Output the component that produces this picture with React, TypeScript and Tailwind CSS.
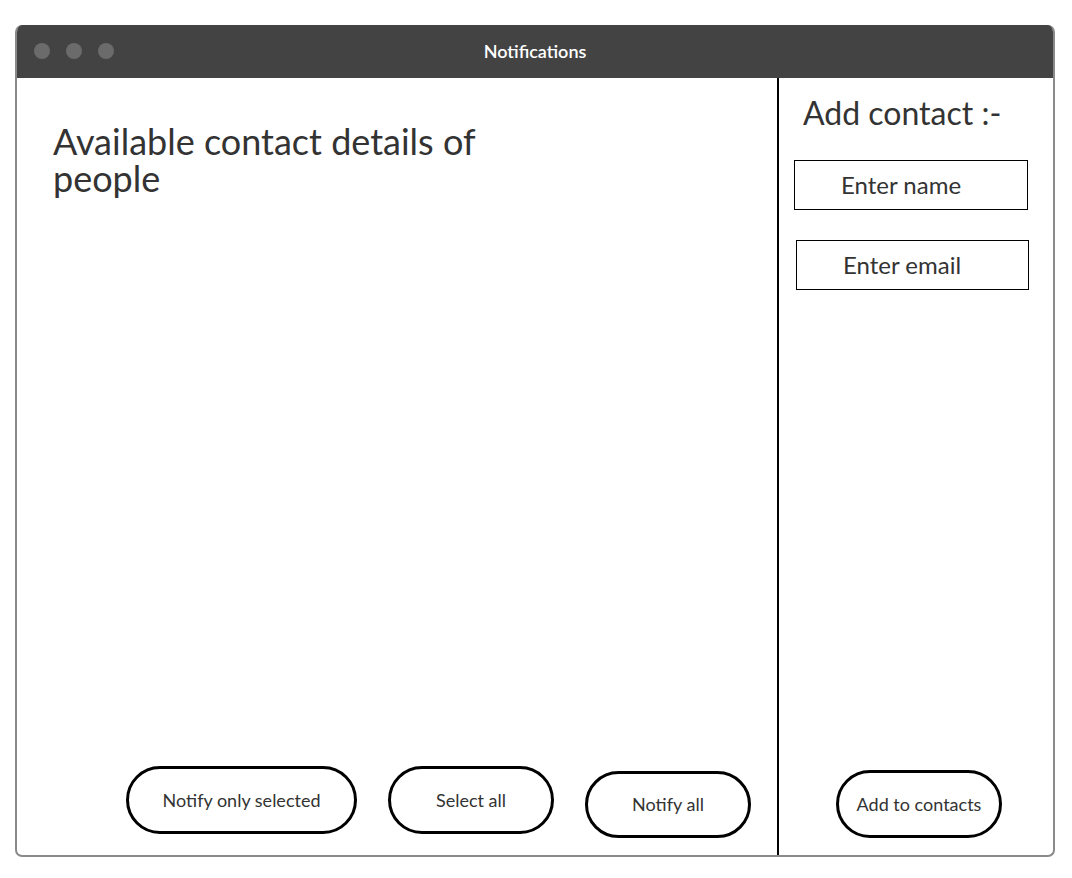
import React from 'react';

const font = { fontFamily: '"Lato", "Open Sans", sans-serif' };

const PillButton: React.FC<{ label: string; className?: string }> = ({ label, className = '' }) => (
    <button
        className={`flex items-center justify-center rounded-full border-[3px] border-black bg-white text-[18px] text-[#333] ${className}`}
    >
        {label}
    </button>
);

export default function App() {
    return (
        <div className="min-h-screen w-full bg-white pt-[25px] pl-[15px]" style={font}>
            <div className="flex h-[832px] w-[1040px] flex-col overflow-hidden rounded-[7px] border-2 border-t-0 border-[#8a8a8a]">
                {/* Title bar */}
                <div className="relative flex h-[53px] shrink-0 items-center justify-center bg-[#434343]">
                    <div className="absolute left-[17px] top-[18px] flex gap-[16px]">
                        <span className="h-[16px] w-[16px] rounded-full bg-[#6b6b6b]" />
                        <span className="h-[16px] w-[16px] rounded-full bg-[#6b6b6b]" />
                        <span className="h-[16px] w-[16px] rounded-full bg-[#6b6b6b]" />
                    </div>
                    <span className="text-[18px] font-semibold text-white">Notifications</span>
                </div>

                <div className="flex flex-1">
                    {/* Left panel */}
                    <div className="flex flex-1 flex-col border-r-2 border-black">
                        <h1 className="ml-[36px] mt-[45px] w-[450px] text-[36px] leading-[37px] text-[#333]">
                            Available contact details of people
                        </h1>
                        <div className="flex-1" />
                        <div className="mb-[17px] ml-[109px] flex items-start gap-[31px]">
                            <PillButton label="Notify only selected" className="h-[68px] w-[231px]" />
                            <PillButton label="Select all" className="h-[68px] w-[166px]" />
                            <PillButton label="Notify all" className="mt-[5px] h-[67px] w-[166px]" />
                        </div>
                    </div>

                    {/* Right panel */}
                    <div className="flex w-[274px] shrink-0 flex-col">
                        <h2 className="ml-[24px] mt-[16px] text-[32px] leading-[38px] text-[#333]">Add contact :-</h2>
                        <div className="ml-[15px] mt-[28px] flex h-[50px] w-[234px] items-center border-[1.5px] border-black pl-[46px] text-[24px] text-[#333]">
                            Enter name
                        </div>
                        <div className="ml-[17px] mt-[30px] flex h-[50px] w-[233px] items-center border-[1.5px] border-black pl-[46px] text-[24px] text-[#333]">
                            Enter email
                        </div>
                        <div className="flex-1" />
                        <PillButton label="Add to contacts" className="mb-[17px] ml-[57px] h-[68px] w-[166px]" />
                    </div>
                </div>
            </div>
        </div>
    );
}
